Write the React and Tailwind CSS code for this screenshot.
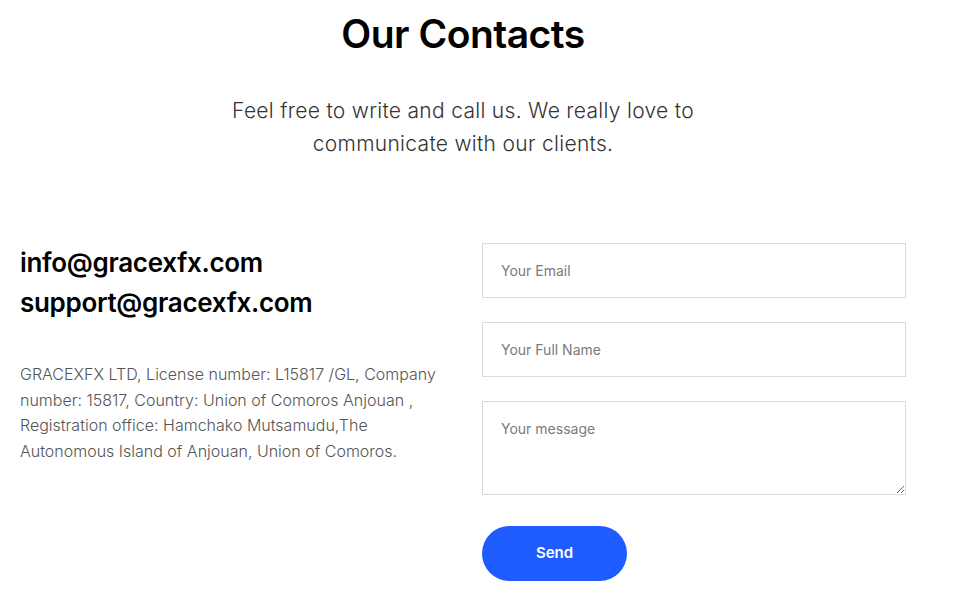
import React from "react";

const font = { fontFamily: "Inter, 'Liberation Sans', sans-serif" };

const Field = ({ placeholder }) => (
  <input
    placeholder={placeholder}
    className="h-[55px] w-full border border-[#d9d9d9] px-[18px] text-[14px] text-[#333] placeholder:text-[#7a7a7a] outline-none"
  />
);

export default function App() {
  return (
    <div className="min-h-screen bg-white text-black" style={font}>
      <div className="ml-5 w-[886px]">
        <div className="pt-[11px] text-center">
          <h1 className="text-[39px] font-semibold leading-[46px] tracking-[-0.5px]">Our Contacts</h1>
          <p className="mx-auto mt-[37px] w-[520px] text-[21px] font-light leading-[33px] tracking-[0.3px] text-[#333]">
            Feel free to write and call us. We really love to communicate with our clients.
          </p>
        </div>

        <div className="mt-[83px] flex gap-5">
          <div className="w-[442px]">
            <div className="text-[26px] font-semibold leading-[40px] tracking-[-0.3px]">
              <div>info@gracexfx.com</div>
              <div>support@gracexfx.com</div>
            </div>
            <p className="mt-[39px] w-[420px] text-[16px] font-light leading-[25.5px] text-[#555]">
              GRACEXFX LTD, License number: L15817 /GL, Company number: 15817, Country: Union of Comoros
              Anjouan , Registration office: Hamchako Mutsamudu,The Autonomous Island of Anjouan, Union of
              Comoros.
            </p>
          </div>

          <form className="flex w-[424px] flex-col gap-6" onSubmit={(e) => e.preventDefault()}>
            <Field placeholder="Your Email" />
            <Field placeholder="Your Full Name" />
            <textarea
              placeholder="Your message"
              className="h-[94px] w-full border border-[#d9d9d9] px-[18px] py-[16px] text-[14px] text-[#333] placeholder:text-[#7a7a7a] outline-none"
            />
            <button
              type="submit"
              className="mt-[7px] h-[55px] w-[145px] rounded-full bg-[#1f5cff] text-[15px] font-semibold text-white"
            >
              Send
            </button>
          </form>
        </div>
      </div>
    </div>
  );
}
